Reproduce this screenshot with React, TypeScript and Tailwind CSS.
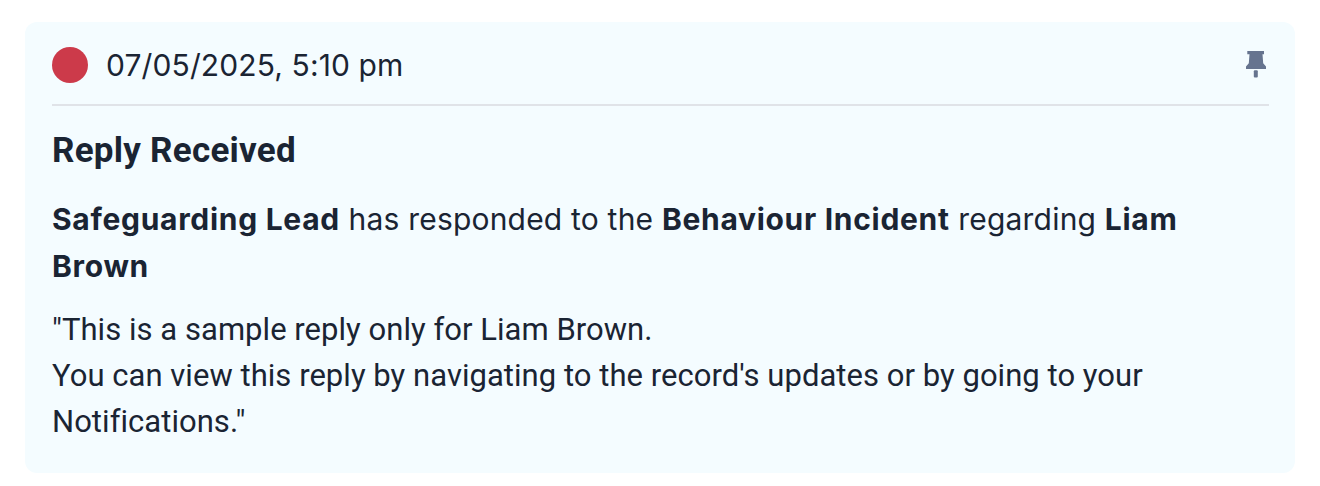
export default function App() {
  return (
    <div className="bg-white w-[1320px] h-[486px] pt-[22px] px-[25px] font-['Roboto','Liberation_Sans',sans-serif] text-[#1a2433]">
      <div className="bg-[#f4fcff] rounded-[12px] h-[451px] pt-[20px] pl-[27px] pr-[26px]">
        <div className="flex items-center justify-between h-[46px]">
          <div className="flex items-center gap-[18px]">
            <span className="w-[36px] h-[36px] rounded-full bg-[#cc3a4a]" />
            <span className="font-['Inter',sans-serif] text-[30px] leading-[46px] tracking-[0.12px]">07/05/2025, 5:10 pm</span>
          </div>
          <svg className="w-[20px] h-[27px] mr-[3px] -mt-[2px]" viewBox="0 0 20 27" fill="#66748f">
            <path d="M1.300 0H18v3.300h-1.500l.7 9 2.800 3.200V18H0v-2.500l2.800-3.200.7-9H1.300z" />
            <rect x="7.800" y="19.300" width="4" height="7.200" rx="1" />
          </svg>
        </div>
        <div className="h-[2px] bg-[#e0e3e8] mt-[16px]" />
        <h2 className="text-[35px] font-bold leading-[44px] tracking-[0.25px] mt-[23px]">Reply Received</h2>
        <p className="font-['Inter',sans-serif] text-[30px] leading-[47px] tracking-[0.2px] mt-[23px]">
          <strong className="font-bold tracking-[0.7px]">Safeguarding Lead</strong> has responded to the{' '}
          <strong className="font-bold tracking-[0.7px]">Behaviour Incident</strong> regarding{' '}
          <strong className="font-bold tracking-[0.7px]">Liam Brown</strong>
        </p>
        <p className="text-[31px] leading-[46px] tracking-[0.04px] mt-[17px]">
          "This is a sample reply only for Liam Brown.
          <br />
          You can view this reply by navigating to the record's updates or by going to your Notifications."
        </p>
      </div>
    </div>
  )
}
